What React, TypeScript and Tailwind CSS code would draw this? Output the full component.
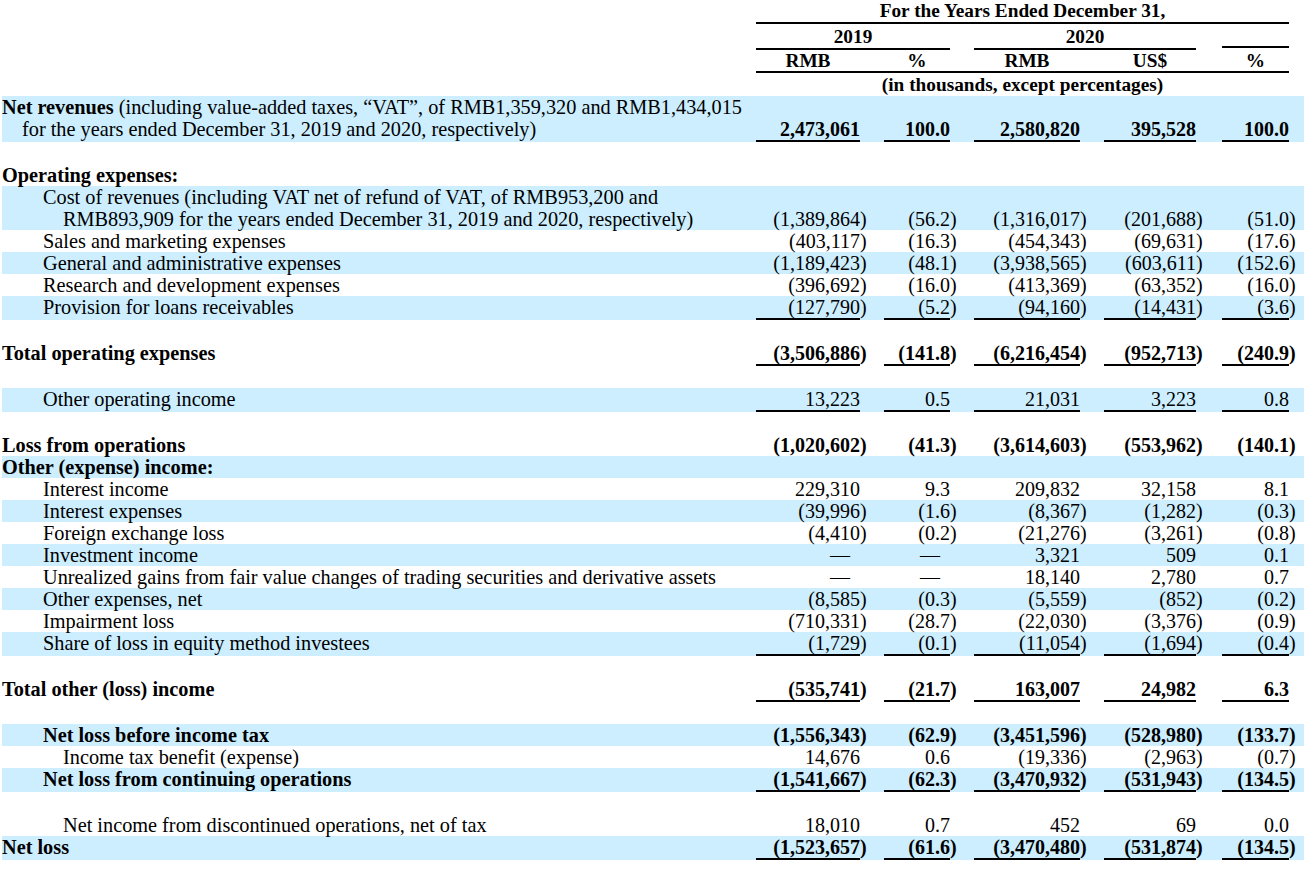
import type { ReactNode } from "react";

type Line = {
  label?: ReactNode;
  indent?: 0 | 1 | 2;
  bold?: boolean;
  blue?: boolean;
  vals?: string[];
  boldVals?: boolean;
  under?: boolean;
  spacer?: boolean;
};

// widths of the five number cells, and the space after each closing paren
const numW = ["w-[104px]", "w-[66px]", "w-[106px]", "w-[92px]", "w-[67px]"];
const gapW = ["w-[17px]", "w-[17px]", "w-[17px]", "w-[19px]", ""];

const indentCls = ["pl-0", "pl-[41px]", "pl-[61px]"];

const rows: Line[] = [
  {
    label: (
      <>
        <span className="font-bold">Net revenues</span> (including value-added taxes, “VAT”, of RMB1,359,320 and RMB1,434,015
        <br />
        <span className="pl-[20px]">for the years ended December 31, 2019 and 2020, respectively)</span>
      </>
    ),
    blue: true,
    vals: ["2,473,061", "100.0", "2,580,820", "395,528", "100.0"],
    boldVals: true,
    under: true,
  },
  { spacer: true },
  { label: "Operating expenses:", bold: true },
  {
    label: (
      <>
        Cost of revenues (including VAT net of refund of VAT, of RMB953,200 and
        <br />
        <span className="pl-[20px]">RMB893,909 for the years ended December 31, 2019 and 2020, respectively)</span>
      </>
    ),
    indent: 1,
    blue: true,
    vals: ["(1,389,864)", "(56.2)", "(1,316,017)", "(201,688)", "(51.0)"],
  },
  { label: "Sales and marketing expenses", indent: 1, vals: ["(403,117)", "(16.3)", "(454,343)", "(69,631)", "(17.6)"] },
  { label: "General and administrative expenses", indent: 1, blue: true, vals: ["(1,189,423)", "(48.1)", "(3,938,565)", "(603,611)", "(152.6)"] },
  { label: "Research and development expenses", indent: 1, vals: ["(396,692)", "(16.0)", "(413,369)", "(63,352)", "(16.0)"] },
  { label: "Provision for loans receivables", indent: 1, blue: true, under: true, vals: ["(127,790)", "(5.2)", "(94,160)", "(14,431)", "(3.6)"] },
  { spacer: true },
  { label: "Total operating expenses", bold: true, boldVals: true, under: true, vals: ["(3,506,886)", "(141.8)", "(6,216,454)", "(952,713)", "(240.9)"] },
  { spacer: true },
  { label: "Other operating income", indent: 1, blue: true, under: true, vals: ["13,223", "0.5", "21,031", "3,223", "0.8"] },
  { spacer: true },
  { label: "Loss from operations", bold: true, boldVals: true, vals: ["(1,020,602)", "(41.3)", "(3,614,603)", "(553,962)", "(140.1)"] },
  { label: "Other (expense) income:", bold: true, blue: true },
  { label: "Interest income", indent: 1, vals: ["229,310", "9.3", "209,832", "32,158", "8.1"] },
  { label: "Interest expenses", indent: 1, blue: true, vals: ["(39,996)", "(1.6)", "(8,367)", "(1,282)", "(0.3)"] },
  { label: "Foreign exchange loss", indent: 1, vals: ["(4,410)", "(0.2)", "(21,276)", "(3,261)", "(0.8)"] },
  { label: "Investment income", indent: 1, blue: true, vals: ["—", "—", "3,321", "509", "0.1"] },
  { label: "Unrealized gains from fair value changes of trading securities and derivative assets", indent: 1, vals: ["—", "—", "18,140", "2,780", "0.7"] },
  { label: "Other expenses, net", indent: 1, blue: true, vals: ["(8,585)", "(0.3)", "(5,559)", "(852)", "(0.2)"] },
  { label: "Impairment loss", indent: 1, vals: ["(710,331)", "(28.7)", "(22,030)", "(3,376)", "(0.9)"] },
  { label: "Share of loss in equity method investees", indent: 1, blue: true, under: true, vals: ["(1,729)", "(0.1)", "(11,054)", "(1,694)", "(0.4)"] },
  { spacer: true },
  { label: "Total other (loss) income", bold: true, boldVals: true, under: true, vals: ["(535,741)", "(21.7)", "163,007", "24,982", "6.3"] },
  { spacer: true },
  { label: "Net loss before income tax", indent: 1, bold: true, boldVals: true, blue: true, vals: ["(1,556,343)", "(62.9)", "(3,451,596)", "(528,980)", "(133.7)"] },
  { label: "Income tax benefit (expense)", indent: 2, vals: ["14,676", "0.6", "(19,336)", "(2,963)", "(0.7)"] },
  { label: "Net loss from continuing operations", indent: 1, bold: true, boldVals: true, blue: true, under: true, vals: ["(1,541,667)", "(62.3)", "(3,470,932)", "(531,943)", "(134.5)"] },
  { spacer: true },
  { label: "Net income from discontinued operations, net of tax", indent: 2, vals: ["18,010", "0.7", "452", "69", "0.0"] },
  { label: "Net loss", bold: true, boldVals: true, blue: true, under: true, vals: ["(1,523,657)", "(61.6)", "(3,470,480)", "(531,874)", "(134.5)"] },
];

function Values({ vals, bold, under }: { vals: string[]; bold?: boolean; under?: boolean }) {
  return (
    <div className={`flex items-end ${bold ? "font-bold" : ""}`}>
      {vals.map((v, i) => {
        const neg = v.startsWith("(");
        const dash = v === "—";
        return (
          <div key={i} className="flex items-end">
            <div className={`${numW[i]} text-right whitespace-nowrap ${under ? "border-b-2 border-black" : ""} ${dash ? "pr-[10px]" : ""}`}>
              {neg ? v.slice(0, -1) : v}
            </div>
            <div className={`w-[7px] whitespace-nowrap ${under ? "pb-[2px]" : ""}`}>{neg ? ")" : ""}</div>
            {gapW[i] && <div className={gapW[i]} />}
          </div>
        );
      })}
    </div>
  );
}

function BodyRow({ row }: { row: Line }) {
  if (row.spacer) return <div className="h-[22px]" />;
  return (
    <div className={`flex items-end ${row.blue ? "bg-[#cceeff]" : "bg-white"}`}>
      <div
        className={`w-[754px] shrink-0 whitespace-nowrap self-start text-[20.3px] ${indentCls[row.indent ?? 0]} ${row.bold ? "font-bold" : ""} ${row.under ? "pb-[2px]" : ""}`}
      >
        {row.label}
      </div>
      {row.vals && <Values vals={row.vals} bold={row.boldVals} under={row.under} />}
    </div>
  );
}

function Header() {
  return (
    <div className="font-bold text-[19.3px]">
      <div className="flex">
        <div className="w-[754px] shrink-0" />
        <div className="w-[533px] h-[24px] text-center border-b-2 border-black">For the Years Ended December 31,</div>
      </div>
      <div className="flex items-start">
        <div className="w-[754px] shrink-0" />
        <div className="w-[194px] h-[26px] text-center pt-[2px] border-b-2 border-black">2019</div>
        <div className="w-[24px]" />
        <div className="w-[222px] h-[26px] text-center pt-[2px] border-b-2 border-black">2020</div>
        <div className="w-[26px]" />
        <div className="w-[67px] h-[24px] border-b-2 border-black" />
      </div>
      <div className="flex">
        <div className="w-[754px] shrink-0" />
        <div className="w-[533px] h-[23px] flex border-b-2 border-black">
          <div className="w-[104px] text-center">RMB</div>
          <div className="w-[24px]" />
          <div className="w-[66px] text-center">%</div>
          <div className="w-[24px]" />
          <div className="w-[106px] text-center">RMB</div>
          <div className="w-[24px]" />
          <div className="w-[92px] text-center">US$</div>
          <div className="w-[26px]" />
          <div className="w-[67px] text-center">%</div>
        </div>
      </div>
      <div className="flex">
        <div className="w-[754px] shrink-0" />
        <div className="w-[533px] h-[23px] text-center pt-[1px]">(in thousands, except percentages)</div>
      </div>
    </div>
  );
}

export default function App() {
  return (
    <div className="w-[1304px] h-[870px] bg-white text-black overflow-hidden font-['Liberation_Serif','Times_New_Roman',serif] text-[20px] leading-[22px]">
      <div className="pl-[2px]">
        <Header />
        {rows.map((r, i) => (
          <BodyRow key={i} row={r} />
        ))}
      </div>
    </div>
  );
}
